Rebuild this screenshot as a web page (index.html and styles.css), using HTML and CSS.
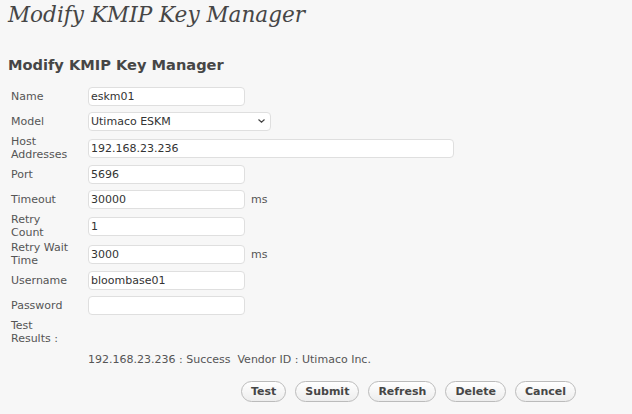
FILE: index.html
```html
<!DOCTYPE html>
<html lang="en">
<head>
  <meta charset="UTF-8">
  <title>Modify KMIP Key Manager</title>
  <link rel="stylesheet" href="styles.css">
</head>
<body>
  <div class="wrap">
    <h2 class="page-title">Modify KMIP Key Manager</h2>
    <h3 class="form-title">Modify KMIP Key Manager</h3>
    <form class="km-form">
      <table class="form-table">
        <tr>
          <th>Name</th>
          <td><input type="text" class="short" value="eskm01"></td>
        </tr>
        <tr>
          <th>Model</th>
          <td>
            <span class="select-wrap">
              <select class="model">
                <option>Utimaco ESKM</option>
              </select>
              <svg class="chevron" width="7" height="4" viewBox="0 0 7 4"><path d="M0.5 0.5 L3.5 3.2 L6.5 0.5" fill="none" stroke="#444" stroke-width="1.2"/></svg>
            </span>
          </td>
        </tr>
        <tr>
          <th>Host Addresses</th>
          <td><input type="text" class="long" value="192.168.23.236"></td>
        </tr>
        <tr>
          <th>Port</th>
          <td><input type="text" class="short" value="5696"></td>
        </tr>
        <tr>
          <th>Timeout</th>
          <td><input type="text" class="short" value="30000"><span class="unit">ms</span></td>
        </tr>
        <tr>
          <th>Retry Count</th>
          <td><input type="text" class="short" value="1"></td>
        </tr>
        <tr>
          <th>Retry Wait Time</th>
          <td><input type="text" class="short" value="3000"><span class="unit">ms</span></td>
        </tr>
        <tr>
          <th>Username</th>
          <td><input type="text" class="short" value="bloombase01"></td>
        </tr>
        <tr>
          <th>Password</th>
          <td><input type="password" class="short" value=""></td>
        </tr>
        <tr>
          <th>Test Results :</th>
          <td></td>
        </tr>
      </table>
      <p class="result">192.168.23.236 : Success&nbsp; Vendor ID : Utimaco Inc.</p>
      <div class="actions">
        <button type="button" class="btn">Test</button>
        <button type="button" class="btn">Submit</button>
        <button type="button" class="btn">Refresh</button>
        <button type="button" class="btn">Delete</button>
        <button type="button" class="btn">Cancel</button>
      </div>
    </form>
  </div>
</body>
</html>
```

FILE: styles.css
```css
html, body {
  margin: 0;
  background: #f7f7f7;
}
body {
  font-family: Verdana, "DejaVu Sans", sans-serif;
  font-size: 11px;
  color: #555;
}
.wrap {
  padding: 0 8px;
}
.page-title {
  margin: 0;
  padding-top: 1px;
  font-family: Georgia, "DejaVu Serif", serif;
  font-style: italic;
  font-weight: normal;
  font-size: 21.6px;
  line-height: 28px;
  color: #464646;
}
.form-title {
  margin: 26px 0 10px;
  font-size: 14.6px;
  line-height: 19px;
  font-weight: bold;
  color: #464646;
}
.form-table {
  border-collapse: collapse;
  margin-left: 1px;
}
.form-table th {
  width: 62px;
  padding: 1px 15px 1px 2px;
  text-align: left;
  font-weight: normal;
  line-height: 13px;
  vertical-align: middle;
}
.form-table td {
  padding: 1px 0;
  vertical-align: middle;
  white-space: nowrap;
}
input[type="text"],
input[type="password"],
select {
  box-sizing: border-box;
  height: 19px;
  margin: 2px 0;
  padding: 0 2px;
  border: 1px solid #dfdfdf;
  border-radius: 4px;
  background: #fff;
  font-family: inherit;
  font-size: 11px;
  color: #333;
  vertical-align: middle;
}
input.short {
  width: 157px;
}
input.long {
  width: 366px;
}
.select-wrap {
  position: relative;
  display: inline-block;
}
select.model {
  -webkit-appearance: none;
  appearance: none;
  width: 183px;
  padding: 0 16px 0 2px;
}
.chevron {
  position: absolute;
  left: 170px;
  top: 9px;
  pointer-events: none;
}
.unit {
  margin-left: 6px;
  vertical-align: middle;
}
.result {
  margin: 7px 0 0 80px;
  line-height: 13px;
}
.actions {
  display: flex;
  justify-content: flex-end;
  gap: 9px;
  width: 568px;
  margin-top: 15px;
}
.btn {
  height: 21px;
  padding: 0 9px;
  border: 1px solid #bbb;
  border-radius: 11px;
  background: linear-gradient(#fff, #ededed);
  font-family: inherit;
  font-size: 11px;
  font-weight: bold;
  color: #464646;
  cursor: pointer;
}
.btn:hover {
  border-color: #666;
}
```
